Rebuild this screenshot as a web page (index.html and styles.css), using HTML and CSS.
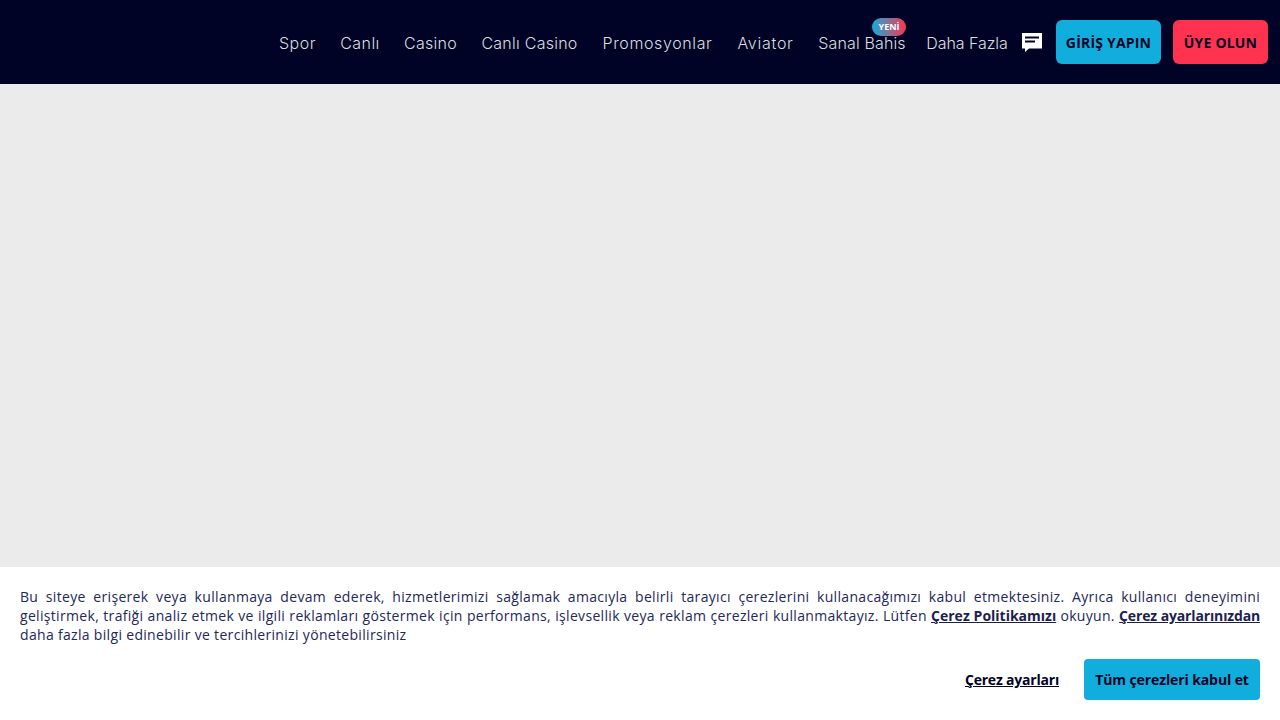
FILE: index.html
```html
<!DOCTYPE html>
<html lang="tr">
<head>
<meta charset="utf-8">
<title>Ana Sayfa</title>
<link rel="stylesheet" href="styles.css">
</head>
<body>
<div class="page">
  <header class="topbar">
    <nav class="nav">
      <a class="nav-link w-spor">Spor</a>
      <a class="nav-link w-canli">Canlı</a>
      <a class="nav-link w-casino">Casino</a>
      <a class="nav-link w-live">Canlı Casino</a>
      <a class="nav-link w-promo">Promosyonlar</a>
      <a class="nav-link w-aviator">Aviator</a>
      <a class="nav-link w-sanal">Sanal Bahis<span class="badge">YENİ</span></a>
      <a class="nav-link more w-more">Daha Fazla</a>
    </nav>
    <svg class="chat" viewBox="0 0 24 24" aria-hidden="true"><path fill-rule="evenodd" d="M2 3h20v15.5H9L5 22v-3.500H2zM5 6.500v2h14v-2zM5 10.500v2h10v-2z"/></svg>
    <a class="btn btn-login">GİRİŞ YAPIN</a>
    <a class="btn btn-join">ÜYE OLUN</a>
  </header>
  <main class="content"></main>
  <section class="cookie">
    <p class="cookie-text">Bu siteye erişerek veya kullanmaya devam ederek, hizmetlerimizi sağlamak amacıyla belirli tarayıcı çerezlerini kullanacağımızı kabul etmektesiniz. Ayrıca kullanıcı deneyimini geliştirmek, trafiği analiz etmek ve ilgili reklamları göstermek için performans, işlevsellik veya reklam çerezleri kullanmaktayız. Lütfen <a class="cookie-link">Çerez Politikamızı</a> okuyun. <a class="cookie-link narrow">Çerez ayarlarınızdan</a> daha fazla bilgi edinebilir ve tercihlerinizi yönetebilirsiniz</p>
    <div class="cookie-actions">
      <a class="settings">Çerez ayarları</a>
      <a class="accept">Tüm çerezleri kabul et</a>
    </div>
  </section>
</div>
</body>
</html>
```
FILE: styles.css
```css
* { box-sizing: border-box; }
html, body { margin: 0; height: 100%; }
body { font-family: "Open Sans", "Liberation Sans", sans-serif; background: #ebebeb; overflow: hidden; }
.page { height: 720px; display: flex; flex-direction: column; }
.topbar { height: 84px; flex: none; background: #000326; display: flex; align-items: center; justify-content: flex-end; padding-right: 12px; }
.nav { display: flex; align-items: center; margin-right: 12px; }
.nav-link { position: relative; display: block; font-family: Inter, "Open Sans", sans-serif; font-size: 16px; font-weight: 350; line-height: 24px; color: #dededf; white-space: nowrap; margin-left: 24px; margin-top: 2px; text-align: center; }
.nav-link.more { margin-left: 20px; }
.w-spor { width: 37px; letter-spacing: .5px; }
.w-canli { width: 40px; letter-spacing: .45px; }
.w-casino { width: 53px; letter-spacing: .25px; }
.w-live { width: 97px; letter-spacing: .25px; }
.w-promo { width: 111px; letter-spacing: .62px; }
.w-aviator { width: 57px; letter-spacing: .75px; }
.w-sanal { width: 88px; letter-spacing: .15px; }
.w-more { width: 82px; letter-spacing: -.05px; }
.badge { position: absolute; right: 0; top: -13px; width: 34px; height: 18px; border-radius: 9px; background: linear-gradient(90deg, #11aedd, #ff3350); color: #fff; font-family: "Open Sans", sans-serif; font-size: 9px; font-weight: 700; line-height: 18px; letter-spacing: 0; text-align: center; }
.chat { width: 24px; height: 24px; fill: #fff; flex: none; margin-right: 12px; }
.btn { display: flex; align-items: center; justify-content: center; height: 44px; border-radius: 6px; color: #000326; font-size: 14px; font-weight: 700; letter-spacing: .2px; white-space: nowrap; }
.btn-login { width: 105px; background: #11aedd; margin-right: 12px; }
.btn-join { width: 95px; background: #ff3350; }
.content { flex: 1; }
.cookie { height: 153px; flex: none; background: #fff; padding: 20px; }
.cookie-text { margin: 0; font-size: 14px; line-height: 19px; letter-spacing: .32px; color: #23275a; text-align: justify; }
.cookie-link { font-weight: 700; letter-spacing: 0; color: #1c2150; text-decoration: underline; }
.cookie-link.narrow { letter-spacing: -.15px; }
.cookie-actions { display: flex; justify-content: flex-end; align-items: center; margin-top: 15px; }
.settings { font-size: 14px; font-weight: 700; letter-spacing: -.2px; color: #000326; text-decoration: underline; margin-right: 25px; }
.accept { display: flex; align-items: center; justify-content: center; width: 176px; height: 41px; background: #11aedd; border-radius: 4px; color: #000326; font-size: 14px; font-weight: 700; letter-spacing: -.1px; }
```
